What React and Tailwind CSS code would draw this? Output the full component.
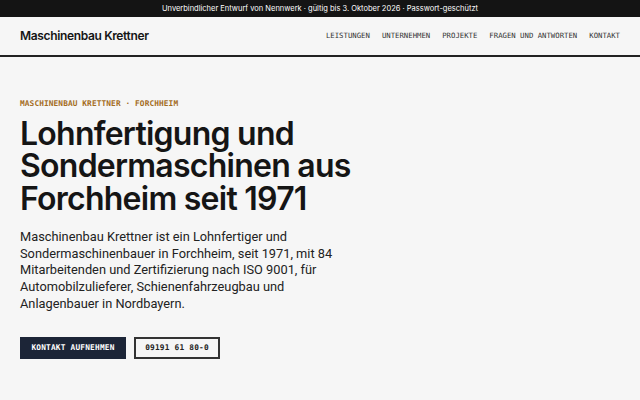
export default function App() {
  const nav = ["LEISTUNGEN", "UNTERNEHMEN", "PROJEKTE", "FRAGEN UND ANTWORTEN", "KONTAKT"];
  const mono = { fontFamily: '"DejaVu Sans Mono", "Liberation Mono", monospace' };
  return (
    <div className="min-h-[400px] w-full bg-[#f6f6f6] text-[#151515]" style={{ fontFamily: 'Inter, "Noto Sans", sans-serif' }}>
      <div className="flex h-[17px] items-center justify-center bg-[#141414] text-[7.5px] text-white">
        Unverbindlicher Entwurf von Nennwerk · gültig bis 3. Oktober 2026 · Passwort-geschützt
      </div>
      <header className="flex h-[40px] items-center justify-between border-b-2 border-[#222] px-5">
        <div className="text-[12px] font-semibold tracking-[-0.35px]">Maschinenbau Krettner</div>
        <nav className="flex gap-[12px] text-[7.3px] text-[#333]" style={mono}>
          {nav.map((n) => (
            <span key={n}>{n}</span>
          ))}
        </nav>
      </header>
      <main className="px-5 pt-[41px]">
        <div className="text-[7.8px] font-bold tracking-[0.1px] text-[#a46d1e]" style={mono}>
          MASCHINENBAU KRETTNER · FORCHHEIM
        </div>
        <h1 className="mt-[8px] text-[32px] font-semibold leading-[32.5px] tracking-[-0.75px]">
          Lohnfertigung und
          <br />
          Sondermaschinen aus
          <br />
          Forchheim seit 1971
        </h1>
        <p className="mt-[14px] w-[320px] text-[12.8px] leading-[16.6px] text-[#222]" style={{ fontFamily: 'Roboto, "Noto Sans", sans-serif' }}>
          Maschinenbau Krettner ist ein Lohnfertiger und Sondermaschinenbauer in Forchheim, seit 1971, mit 84 Mitarbeitenden und Zertifizierung nach ISO 9001, für Automobilzulieferer, Schienenfahrzeugbau und Anlagenbauer in Nordbayern.
        </p>
        <div className="mt-[25px] flex gap-2">
          <button className="h-[22px] w-[106px] bg-[#1c2537] text-[7.8px] font-bold tracking-[0.2px] text-white" style={mono}>
            KONTAKT AUFNEHMEN
          </button>
          <button className="h-[22px] w-[86px] border-2 border-[#333] text-[7.8px] font-bold tracking-[0.2px] text-[#222]" style={mono}>
            09191 61 80-0
          </button>
        </div>
      </main>
    </div>
  );
}
